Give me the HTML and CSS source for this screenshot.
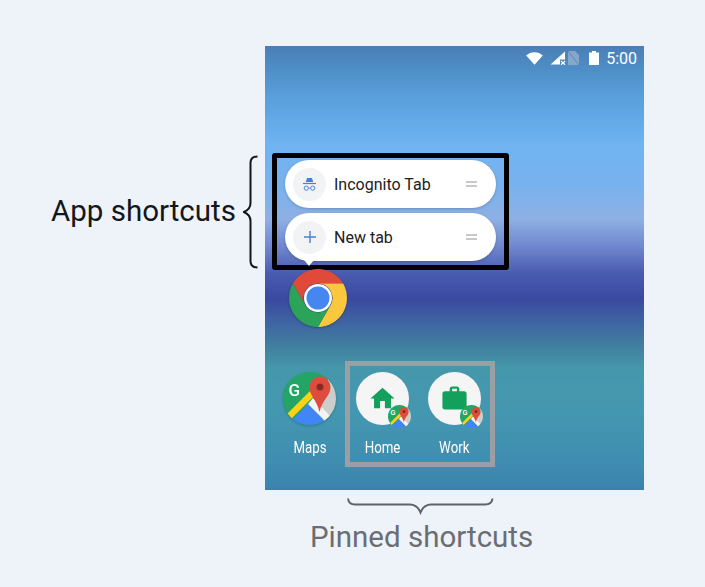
FILE: index.html
```html
<!DOCTYPE html>
<html lang="en">
<head>
  <meta charset="UTF-8" />
  <title>App shortcuts and pinned shortcuts</title>
  <link rel="stylesheet" href="styles.css">
</head>
<body>
  <!-- Maps logo, used for the big icon and the two badges -->
  <svg class="defs" width="0" height="0" aria-hidden="true">
    <defs>
      <clipPath id="maps-clip"><circle cx="26.5" cy="26.5" r="26.5"/></clipPath>
      <symbol id="maps-logo" viewBox="0 0 53 53">
        <g clip-path="url(#maps-clip)">
          <rect width="53" height="53" fill="#22a565"/>
          <path d="M30 22 53 0V53H42Z" fill="#cdcdcd"/>
          <path d="M25 32 44 51 41 53H10V47Z" fill="#4285f4"/>
          <path d="M25 32 30 26 49 46 44 51Z" fill="#f3f3f3"/>
          <path d="M3 43 27 19 31 24 7 48Z" fill="#fcd116"/>
        </g>
        <path d="M37 4.500C31 4.500 26.500 9.500 26.500 15.500 26.500 24 33.500 27 36.500 40 39.500 27 47.500 24 47.500 15.500 47.500 9.500 43 4.500 37 4.500Z" fill="#df4b3c"/>
        <circle cx="37" cy="15" r="3.500" fill="#8a2a22"/>
        <text x="5.500" y="24" class="maps-g">G</text>
      </symbol>
    </defs>
  </svg>

  <div class="page">
    <div class="side">
      <span class="side-label">App shortcuts</span>
      <svg class="brace" width="16" height="114" viewBox="0 0 16 114">
        <path d="M14.500 1.500C10 1.500 7.500 3 7.500 8V48C7.500 53 4.500 55.500 .8 57 4.500 58.500 7.500 61 7.500 66V106C7.500 111 10 112.500 14.500 112.500"/>
      </svg>
    </div>

    <div class="column">
      <div class="phone">
        <div class="status-bar">
          <svg class="wifi" width="17" height="13" viewBox="0 0 17 13"><path d="M.2 3.600C2.400 1.500 5.200.3 8.500.3s6.100 1.200 8.300 3.300L8.500 12.800Z"/></svg>
          <svg class="signal" width="16" height="14" viewBox="0 0 16 14">
            <path d="M15 .5V8.500H10V13.500H.5Z" fill="#fff"/>
            <path d="M11 10 15 13.800M15 10 11 13.800" stroke="#fff" stroke-width="1.200"/>
          </svg>
          <svg class="no-sim" width="11" height="14" viewBox="0 0 11 14">
            <path d="M0 0H7L11 4V14H0Z" fill="#a5b9d2" fill-opacity=".65"/>
            <path d="M0 0 11 14" stroke="#5d86b3" stroke-width="1"/>
          </svg>
          <svg class="battery" width="10" height="14" viewBox="0 0 10 14"><path d="M3 0H7V1.500H10V14H0V1.500H3Z" fill="#fff"/></svg>
          <span class="clock">5:00</span>
        </div>

        <div class="shortcut-frame">
          <div class="pill">
            <span class="pill-icon">
              <svg width="13" height="13" viewBox="0 0 16 16">
                <path d="M5 0H11L12.500 5H3.500Z" fill="#4a7fd8"/>
                <rect x="0" y="6" width="16" height="1.500" fill="#4a7fd8"/>
                <circle cx="4" cy="12.500" r="2.600" fill="none" stroke="#4a7fd8" stroke-width="1.200"/>
                <circle cx="12" cy="12.500" r="2.600" fill="none" stroke="#4a7fd8" stroke-width="1.200"/>
                <path d="M6.600 12.500H9.400" stroke="#4a7fd8" stroke-width="1"/>
              </svg>
            </span>
            <span class="pill-text">Incognito Tab</span>
            <span class="handle"></span>
          </div>
          <div class="pill">
            <span class="pill-icon">
              <svg width="12" height="12" viewBox="0 0 12 12"><path d="M6 0V12M0 6H12" stroke="#4a7fd8" stroke-width="1.400"/></svg>
            </span>
            <span class="pill-text">New tab</span>
            <span class="handle"></span>
          </div>
          <span class="notch"></span>
        </div>

        <svg class="chrome" width="58" height="58" viewBox="0 0 58 58">
          <path d="M3.900 14.500A29 29 0 0 1 54.100 14.500H29A14.500 14.500 0 0 0 16.440 36.250Z" fill="#e04a38"/>
          <path d="M3.900 14.500A29 29 0 0 1 54.100 14.500H29A14.500 14.500 0 0 0 16.440 36.250Z" fill="#fbc73d" transform="rotate(120 29 29)"/>
          <path d="M3.900 14.500A29 29 0 0 1 54.100 14.500H29A14.500 14.500 0 0 0 16.440 36.250Z" fill="#2ba45a" transform="rotate(240 29 29)"/>
          <circle cx="29" cy="29" r="14" fill="#fff"/>
          <circle cx="29" cy="29" r="11.500" fill="#4587f0"/>
        </svg>

        <div class="home-row">
          <div class="app app-maps">
            <svg class="app-icon" width="53" height="53"><use href="#maps-logo"/></svg>
            <span class="app-label">Maps</span>
          </div>
          <div class="pinned-frame">
            <div class="app">
              <span class="app-circle">
                <svg width="29" height="29" viewBox="0 0 24 24"><path d="M10 20v-6h4v6h5v-8h3L12 3 2 12h3v8z"/></svg>
                <svg class="badge" width="23" height="23"><use href="#maps-logo"/></svg>
              </span>
              <span class="app-label">Home</span>
            </div>
            <div class="app">
              <span class="app-circle">
                <svg width="29" height="29" viewBox="0 0 24 24"><path d="M20 6h-4V4c0-1.110-.89-2-2-2h-4c-1.110 0-2 .89-2 2v2H4c-1.110 0-1.990.89-1.990 2L2 19c0 1.110.89 2 2 2h16c1.110 0 2-.89 2-2V8c0-1.110-.89-2-2-2zm-6 0h-4V4h4v2z"/></svg>
                <svg class="badge" width="23" height="23"><use href="#maps-logo"/></svg>
              </span>
              <span class="app-label">Work</span>
            </div>
          </div>
        </div>
      </div>

      <svg class="bracket" width="148" height="18" viewBox="0 0 148 18">
        <path d="M1 1.500C1.500 6 4 7.500 8 7.500H63C68 7.500 71.500 10.500 73.500 15.500 75.500 10.500 79 7.500 84 7.500H138C142 7.500 145 6 145.500 1.500"/>
      </svg>
      <div class="column-label">Pinned shortcuts</div>
    </div>
  </div>
</body>
</html>
```

FILE: styles.css
```css
:root {
  --page-bg: #eef2f9;
  --green: #12a05c;
  --frame-gray: #9b9fa3;
  --label-gray: #6a6e73;
}

* {
  box-sizing: border-box;
}

body {
  margin: 0;
  background-color: var(--page-bg);
  font-family: Roboto, "Liberation Sans", sans-serif;
  overflow: hidden;
}

.defs {
  display: block;
  height: 0;
}

.maps-g {
  font-family: Roboto, sans-serif;
  font-size: 17px;
  font-weight: 500;
  fill: #fff;
}

.page {
  display: flex;
  padding: 46px 0 0 51px;
  height: 587px;
}

/* Left annotation */
.side {
  display: flex;
  align-items: center;
  justify-content: space-between;
  width: 208px;
  height: 114px;
  margin: 109px 6px 0 0;
}

.side-label {
  font-size: 29.500px;
  line-height: 36px;
  color: #14171a;
  white-space: nowrap;
  margin-top: -3px;
}

.brace {
  flex: none;
  fill: none;
  stroke: #14171a;
  stroke-width: 2;
}

/* Phone screen */
.column {
  width: 379px;
}

.phone {
  height: 444px;
  background: linear-gradient(to bottom,
    #4a7fb5 0,
    #4d8cc4 20px,
    #589fdc 50px,
    #70b4f2 100px,
    #78b2ee 140px,
    #8eb0e4 173px,
    #7088cf 200px,
    #4a5cb0 227px,
    #3a49a0 253px,
    #3f65a2 277px,
    #417f9f 300px,
    #4598ab 323px,
    #4497b0 367px,
    #3f8db0 417px,
    #3a82ae 444px);
}

.status-bar {
  display: flex;
  align-items: center;
  justify-content: flex-end;
  height: 24px;
  padding-right: 7px;
}

.wifi {
  fill: #fff;
  margin-right: 7px;
}

.signal {
  margin-right: 2px;
}

.no-sim {
  margin-right: 10px;
}

.battery {
  margin-right: 7px;
}

.clock {
  font-size: 16px;
  color: #fff;
}

/* App shortcuts */
.shortcut-frame {
  position: relative;
  display: flex;
  flex-direction: column;
  gap: 5px;
  width: 237px;
  height: 117px;
  margin: 83px 0 0 7px;
  padding: 2px 0 0 8px;
  border: 5px solid #000;
  border-radius: 3px;
}

.pill {
  display: flex;
  align-items: center;
  width: 211px;
  height: 48px;
  padding: 0 19px 0 8px;
  background-color: #fff;
  border-radius: 24px;
  box-shadow: 0 1px 3px rgba(0, 0, 0, 0.2);
}

.pill-icon {
  display: flex;
  align-items: center;
  justify-content: center;
  flex: none;
  width: 33px;
  height: 33px;
  border-radius: 50%;
  background-color: #f1f3f4;
}

.pill-text {
  flex: 1;
  margin-left: 8px;
  font-size: 16px;
  color: #212121;
}

.handle {
  width: 11px;
  height: 6px;
  border-top: 2px solid #c8c8c8;
  border-bottom: 2px solid #c8c8c8;
}

.notch {
  position: absolute;
  left: 27px;
  bottom: -1px;
  border-left: 5px solid transparent;
  border-right: 5px solid transparent;
  border-top: 6px solid #fff;
}

.chrome {
  display: block;
  margin: -1px 0 0 24px;
  position: relative;
  filter: drop-shadow(0 1px 1px rgba(0, 0, 0, 0.25));
}

/* Home screen row */
.home-row {
  display: flex;
  align-items: flex-start;
  gap: 6px;
  margin: 34px 0 0 14px;
}

.pinned-frame {
  display: flex;
  gap: 12px;
  width: 150px;
  height: 106px;
  padding: 6px 0 0 2px;
  border: 5px solid var(--frame-gray);
}

.app {
  display: flex;
  flex-direction: column;
  align-items: center;
  width: 60px;
}

.app-maps {
  padding-top: 11px;
}

.app-icon {
  display: block;
  filter: drop-shadow(0 1px 1px rgba(0, 0, 0, 0.2));
}

.app-circle {
  position: relative;
  display: flex;
  align-items: center;
  justify-content: center;
  width: 53px;
  height: 53px;
  border-radius: 50%;
  background-color: #f5f5f5;
  fill: var(--green);
}

.badge {
  position: absolute;
  right: -2px;
  bottom: -3px;
}

.app-label {
  margin: 14px 0 0 1px;
  font-size: 16px;
  line-height: 18px;
  color: #fff;
  transform: scaleX(0.83);
}

/* Bottom annotation */
.bracket {
  display: block;
  margin: 7px 0 0 82px;
  fill: none;
  stroke: #5f6368;
  stroke-width: 2;
}

.column-label {
  margin-top: 4px;
  padding-left: 45px;
  font-size: 29.500px;
  line-height: 36px;
  color: var(--label-gray);
  white-space: nowrap;
}
```
